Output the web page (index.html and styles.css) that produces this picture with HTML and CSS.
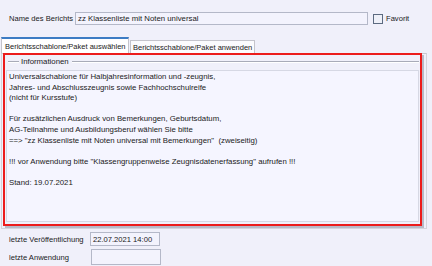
FILE: index.html
```html
<!DOCTYPE html>
<html lang="de">
<head>
<meta charset="utf-8">
<link rel="stylesheet" href="styles.css">
</head>
<body>
<div class="head">
  <span class="lbl">Name des Berichts</span>
  <div class="field name">zz Klassenliste mit Noten universal</div>
  <span class="chk"></span>
  <span class="chk-lbl">Favorit</span>
</div>
<div class="tabs">
  <div class="tab active">Berichtsschablone/Paket auswählen</div>
  <div class="tab">Berichtsschablone/Paket anwenden</div>
</div>
<div class="panel">
  <div class="hl">
    <div class="group-title"><span class="gl short"></span><span class="gt">Informationen</span><span class="gl long"></span></div>
    <div class="memo">
      <div>Universalschablone für Halbjahresinformation und -zeugnis,</div>
      <div>Jahres- und Abschlusszeugnis sowie Fachhochschulreife</div>
      <div>(nicht für Kursstufe)</div>
      <div>&nbsp;</div>
      <div>Für zusätzlichen Ausdruck von Bemerkungen, Geburtsdatum,</div>
      <div>AG-Teilnahme und Ausbildungsberuf wählen Sie bitte</div>
      <div>==&gt; "zz Klassenliste mit Noten universal mit Bemerkungen"&nbsp;&nbsp;(zweiseitig)</div>
      <div>&nbsp;</div>
      <div>!!! vor Anwendung bitte "Klassengruppenweise Zeugnisdatenerfassung" aufrufen !!!</div>
      <div>&nbsp;</div>
      <div>Stand: 19.07.2021</div>
    </div>
  </div>
</div>
<div class="meta">
  <div class="row"><span class="mlbl">letzte Veröffentlichung</span><div class="field date">22.07.2021 14:00</div></div>
  <div class="row"><span class="mlbl">letzte Anwendung</span><div class="field date"></div></div>
</div>
</body>
</html>
```
FILE: styles.css
```css
html, body {
  margin: 0;
  padding: 0;
}
body {
  width: 432px;
  height: 266px;
  overflow: hidden;
  background: #f0f0fa;
  font-family: "Liberation Sans", Arial, sans-serif;
  font-size: 7.6px;
  color: #1a1a1a;
}
.head {
  display: flex;
  align-items: center;
  padding-top: 12px;
  height: 13px;
}
.lbl {
  width: 75px;
  padding-left: 9px;
  box-sizing: border-box;
  white-space: nowrap;
}
.field {
  box-sizing: border-box;
  border: 1px solid #b4b8c8;
  background: #f3f3fd;
  padding-left: 2px;
  display: flex;
  align-items: center;
  white-space: nowrap;
}
.name {
  width: 293px;
  height: 13px;
  font-size: 7.8px;
}
.chk {
  width: 10px;
  height: 10px;
  box-sizing: border-box;
  border: 1px solid #5c6a80;
  background: #eef0f8;
  margin-left: 5px;
}
.chk-lbl {
  margin-left: 3px;
}
.tabs {
  display: flex;
  align-items: flex-end;
  margin-top: 12px;
  padding-left: 1px;
  height: 16px;
  font-size: 7.5px;
}
.tab {
  box-sizing: border-box;
  border: 1px solid #c4c4cc;
  border-bottom: none;
  background: #fbfbfe;
  padding: 0 2px;
  height: 13px;
  display: flex;
  align-items: center;
  white-space: nowrap;
}
.tab.active {
  height: 16px;
  border-top: 2px solid #3d7cc4;
  background: #ffffff;
  width: 128px;
  padding-left: 3px;
}
.tab + .tab {
  width: 125px;
  margin-left: 1px;
  padding-left: 2px;
}
.panel {
  margin-left: 1px;
  width: 426px;
  height: 176px;
  box-sizing: border-box;
  border: 1px solid #d4d4dc;
  border-top-color: #c8c8d0;
  padding-left: 1px;
}
.hl {
  width: 419px;
  height: 173px;
  box-sizing: border-box;
  border: 2px solid #ec1c1c;
  margin-top: -1px;
  box-shadow: 2px 2px 0 #b8bac8;
  padding: 0 1px;
}
.group-title {
  display: flex;
  align-items: center;
  height: 11px;
  margin-top: 1px;
  font-size: 7.8px;
}
.gl {
  height: 0;
  border-top: 1px solid #a8abb8;
  border-bottom: 1px solid #ffffff;
}
.gl.short {
  width: 11px;
  margin-left: 2px;
}
.gl.long {
  flex: 1;
}
.gt {
  padding: 0 3px 0 2px;
}
.memo {
  margin-top: 3px;
  height: 152px;
  box-sizing: border-box;
  border: 1px solid #d6d8e4;
  background: #f5f5ff;
  padding-left: 2px;
  padding-top: 1px;
  font-size: 7.8px;
  line-height: 10.6px;
  white-space: nowrap;
  overflow: hidden;
}
.meta {
  padding-top: 3px;
}
.row {
  display: flex;
  align-items: center;
  height: 14px;
  margin-bottom: 4px;
}
.mlbl {
  width: 90px;
  padding-left: 9px;
  box-sizing: border-box;
  white-space: nowrap;
}
.date {
  width: 70px;
  height: 14px;
}
.row + .row .date {
  margin-left: 1px;
  height: 16px;
}
```
